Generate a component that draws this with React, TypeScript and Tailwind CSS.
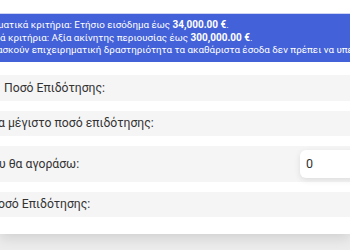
export default function App() {
  return (
    <div className="relative h-[250px] w-[350px] overflow-hidden bg-[#ececec] font-['Roboto',sans-serif] text-[#333]">
      <div className="pointer-events-none absolute -top-[30px] right-[-40px] h-[40px] w-[110px] rounded-full bg-[#d8d8d8] blur-[14px]" />
      <div className="relative flex h-[234px] flex-col bg-white pt-[13px] shadow-[0_4px_12px_rgba(0,0,0,0.12)]">
        <div className="flex h-[49px] flex-col justify-center overflow-hidden whitespace-nowrap border-t border-[#cfd4f2] bg-[#4361d8] text-[9.8px] leading-[12.5px] text-white">
          <p className="-ml-[2px]">
            ματικά κριτήρια: Ετήσιο εισόδημα έως <b className="text-[10px]">34,000.00 €</b>.
          </p>
          <p>
            ά κριτήρια: Αξία ακίνητης περιουσίας έως <b className="text-[10px]">300,000.00 €</b>.
          </p>
          <p className="-ml-[3px]">
            ασκούν επιχειρηματική δραστηριότητα τα ακαθάριστα έσοδα δεν πρέπει να υπερβαίνουν
          </p>
        </div>
        <div className="mt-[13px] flex flex-col gap-[10px] text-[12.2px]">
          <div className="flex h-[26px] items-center bg-[#f5f5f5] whitespace-nowrap">
            <span className="ml-[4px]">Ποσό Επιδότησης:</span>
          </div>
          <div className="flex h-[25px] items-center bg-[#f5f5f5] whitespace-nowrap">
            <span className="-ml-[2px]">α μέγιστο ποσό επιδότησης:</span>
          </div>
          <div className="flex h-[36px] items-center justify-between bg-[#f5f5f5] whitespace-nowrap">
            <span className="-ml-[1px]">υ θα αγοράσω:</span>
            <div className="mr-[-30px] flex h-[28px] w-[80px] items-center rounded-l-[6px] bg-white pl-[6px] text-[12.5px] shadow-[0_2px_6px_rgba(0,0,0,0.1)]">
              0
            </div>
          </div>
          <div className="flex h-[25px] items-center bg-[#f5f5f5] whitespace-nowrap">
            <span className="-ml-[2px]">οσό Επιδότησης:</span>
          </div>
        </div>
      </div>
    </div>
  );
}
